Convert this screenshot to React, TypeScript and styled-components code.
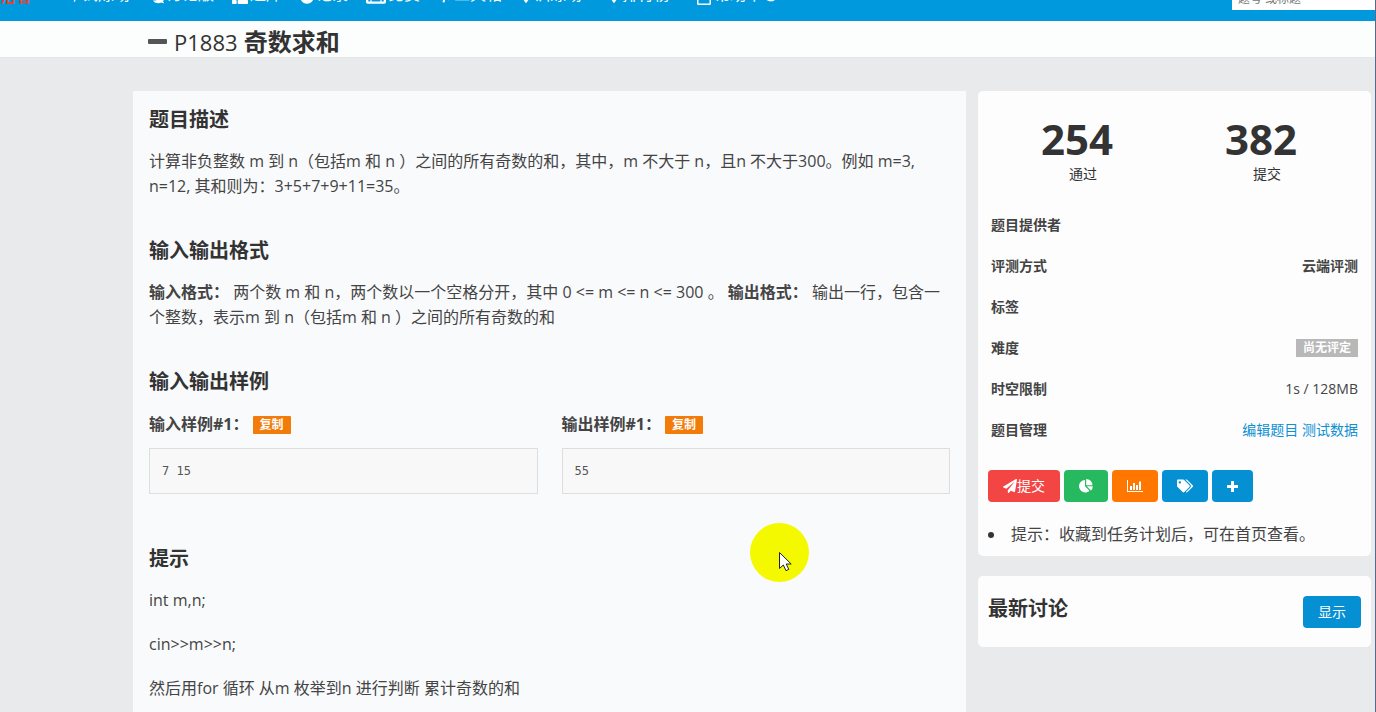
import React from "react";
import styled, { createGlobalStyle } from "styled-components";
import {
  FaBolt,
  FaComments,
  FaThList,
  FaClock,
  FaKeyboard,
  FaMapMarkerAlt,
  FaPaperPlane,
  FaTags,
  FaCode,
  FaRegCalendar,
} from "react-icons/fa";

const GlobalStyle = createGlobalStyle`
  *, *::before, *::after { box-sizing: border-box; }
  body {
    margin: 0;
    background: #e8eaeb;
    color: #333;
    font: 16px/25px "Open Sans", "Noto Sans CJK SC", sans-serif;
  }
  h1, h2, p, ul, dl, dd, pre { margin: 0; padding: 0; }
  button, input { font-family: inherit; }
  a { text-decoration: none; }
`;

const Page = styled.div`
  position: relative;
  display: flex;
  flex-direction: column;
  min-height: 100vh;
  overflow: hidden;
  border-right: 1px solid #56688c;
`;

const TopBar = styled.header`
  display: flex;
  align-items: flex-end;
  height: 21px;
  overflow: hidden;
  background: #0099dd;
`;

const Logo = styled.a`
  width: 70px;
  flex: none;
  padding-bottom: 12px;
  color: #e8432e;
  font-size: 16px;
  font-weight: 700;
`;

const Nav = styled.nav`
  display: flex;
  flex: 1;
  gap: 18px;
  padding-bottom: 14px;
`;

const NavLink = styled.a<{ $wide?: boolean }>`
  display: flex;
  align-items: center;
  gap: 2px;
  padding-right: ${(p) => (p.$wide ? 8 : 0)}px;
  color: #fff;
  white-space: nowrap;
  svg { margin-top: 5px; }
`;

const Search = styled.input`
  width: 143px;
  height: 24px;
  margin-bottom: 11px;
  padding: 0 6px;
  border: 0;
  background: #fff;
  font-size: 12px;
  &::placeholder { color: #777; }
`;

const TitleBar = styled.div`
  display: flex;
  align-items: center;
  gap: 7px;
  height: 37px;
  padding: 5px 0 0 148px;
  background: #fcfdfd;
  border-bottom: 1px solid #e4e6e8;
`;

const Dash = styled.span`
  width: 19px;
  height: 5px;
  border-radius: 1px;
  background: #555;
`;

const Title = styled.h1`
  padding-top: 1px;
  font-size: 24px;
  line-height: 32px;
`;

const ProblemId = styled.span`
  font-size: 22px;
  font-weight: 400;
`;

const Columns = styled.div`
  display: grid;
  flex: 1;
  grid-template-columns: minmax(0, 1fr) 393px;
  gap: 12px;
  padding: 33px 4px 0 133px;
`;

const Problem = styled.main`
  padding: 17px 16px 0;
  background: #f9fafc;
`;

const Section = styled.section<{ $gap?: number }>`
  margin-bottom: ${(p) => p.$gap ?? 40}px;
`;

const Heading = styled.h2`
  margin-bottom: 17px;
  font-size: 20px;
  line-height: 24px;
`;

const Text = styled.p`
  color: #444;
  & + & { margin-top: 19px; }
`;

const Samples = styled.div`
  display: grid;
  grid-template-columns: 1fr 1fr;
  gap: 24px;
`;

const SampleTitle = styled.div`
  display: flex;
  align-items: center;
  gap: 4px;
  padding-top: 1px;
  margin-bottom: 11px;
  color: #444;
  font-weight: 700;
`;

const CopyButton = styled.button`
  height: 18px;
  padding: 0 7px;
  border: 0;
  border-radius: 1px;
  background: #f37b0a;
  color: #fff;
  font-size: 12px;
  font-weight: 700;
  line-height: 18px;
`;

const Code = styled.pre`
  padding: 10px 12px;
  border: 1px solid #dedede;
  background: #f8f8f8;
  color: #555;
  font: 12px/24px "DejaVu Sans Mono", monospace;
`;

const Sidebar = styled.aside`
  display: flex;
  flex-direction: column;
  gap: 20px;
`;

const Card = styled.section`
  border-radius: 5px;
  background: #fdfdfe;
`;

const Stats = styled.div`
  display: grid;
  grid-template-columns: 1fr 1fr;
  padding: 24px 18px 19px 7px;
  text-align: center;
`;

const StatNumber = styled.div`
  font-size: 42px;
  font-weight: 700;
  line-height: 48px;
`;

const StatLabel = styled.div`
  padding-left: 12px;
  font-size: 14px;
  line-height: 22px;
`;

const Facts = styled.dl`
  padding: 0 13px;
`;

const Fact = styled.div`
  display: flex;
  align-items: center;
  justify-content: space-between;
  height: 41px;
  font-size: 14px;
  color: #444;
`;

const FactName = styled.dt`
  font-weight: 600;
`;

const FactLink = styled.a`
  color: #0e90d2;
`;

const Unrated = styled.span`
  display: block;
  height: 18px;
  padding: 0 7px;
  background: #b8b8b8;
  color: #fff;
  font-size: 12px;
  font-weight: 700;
  line-height: 18px;
`;

const Actions = styled.div`
  display: flex;
  gap: 4px;
  padding: 20px 10px 0;
`;

const Button = styled.button<{ $color?: string }>`
  display: flex;
  align-items: center;
  height: 32px;
  padding: 0 15px 2px;
  border: 0;
  border-radius: 4px;
  background: ${(p) => p.$color ?? "#0590d4"};
  color: #fff;
  font-size: 14px;
  svg { margin-top: 2px; }
`;

const Tips = styled.ul`
  padding: 20px 10px 9px;
  color: #444;
  list-style: none;
`;

const Tip = styled.li`
  display: flex;
  align-items: center;
  gap: 17px;
  &::before {
    content: "";
    width: 6px;
    height: 6px;
    border-radius: 50%;
    background: #333;
  }
`;

const Discussion = styled(Card)`
  display: flex;
  align-items: flex-start;
  justify-content: space-between;
  padding: 20px 10px 19px;
`;

const DiscussionTitle = styled(Heading)`
  margin: 1px 0 0;
`;

const Pointer = styled.svg`
  position: absolute;
  top: 523px;
  left: 750px;
  width: 59px;
  height: 59px;
  pointer-events: none;
`;

const PieIcon = () => (
  <svg width="14" height="14" viewBox="0 0 14 14" fill="#fff" aria-hidden="true">
    <path d="M6 1v6.3l4.5 4.4A6.2 6.2 0 1 1 6 1z" />
    <path d="M7.2 0A6.2 6.2 0 0 1 13.4 6.2H7.2z" />
    <path d="M7.8 7.3h6a6 6 0 0 1-1.8 4.2z" />
  </svg>
);

const BarsIcon = () => (
  <svg width="16" height="14" viewBox="0 0 16 14" fill="#fff" aria-hidden="true">
    <path d="M0 1h1v11h15v1H0zM3 7h2v4H3zM6 4h2v7H6zM9 6h2v5H9zM12 2.5h2V11h-2z" />
  </svg>
);

const PlusIcon = () => (
  <svg width="11" height="11" viewBox="0 0 11 11" fill="#fff" aria-hidden="true">
    <path d="M4 .5Q4 0 4.500 0h2Q7 0 7 .5V4h3.500Q11 4 11 4.500v2Q11 7 10.500 7H7v3.500Q7 11 6.500 11h-2Q4 11 4 10.500V7H.5Q0 7 0 6.500v-2Q0 4 .5 4H4z" />
  </svg>
);

const navItems = [
  { icon: <FaBolt size={10} />, label: "试炼场" },
  { icon: <FaComments size={16} />, label: "讨论版" },
  { icon: <FaThList size={16} />, label: "题库" },
  { icon: <FaClock size={14} />, label: "记录" },
  { icon: <FaKeyboard size={20} />, label: "比赛" },
  { icon: <FaCode size={14} />, label: "工具箱" },
  { icon: <FaMapMarkerAlt size={12} />, label: "训练场", wide: true },
  { icon: <FaMapMarkerAlt size={12} />, label: "排行榜", wide: true },
  { icon: <FaRegCalendar size={16} />, label: "帮助中心" },
];

const Sample = ({ title, value }: { title: string; value: string }) => (
  <div>
    <SampleTitle>
      {title}
      <CopyButton type="button">复制</CopyButton>
    </SampleTitle>
    <Code>{value}</Code>
  </div>
);

export default function App() {
  return (
    <Page>
      <GlobalStyle />
      <TopBar>
        <Logo href="#">洛谷</Logo>
        <Nav>
          {navItems.map((item) => (
            <NavLink href="#" key={item.label} $wide={item.wide}>
              {item.icon}
              {item.label}
            </NavLink>
          ))}
        </Nav>
        <Search type="search" aria-label="搜索" placeholder="题号 或标题" />
      </TopBar>
      <TitleBar>
        <Dash />
        <Title>
          <ProblemId>P1883</ProblemId> 奇数求和
        </Title>
      </TitleBar>

      <Columns>
        <Problem>
          <Section>
            <Heading>题目描述</Heading>
            <Text>
              计算非负整数 m 到 n（包括m 和 n ）之间的所有奇数的和，其中，m 不大于 n，且n
              不大于300。例如 m=3, n=12, 其和则为：3+5+7+9+11=35。
            </Text>
          </Section>
          <Section>
            <Heading>输入输出格式</Heading>
            <Text>
              <b>输入格式：</b> 两个数 m 和 n，两个数以一个空格分开，其中 0 &lt;= m &lt;= n &lt;= 300
              。 <b>输出格式：</b> 输出一行，包含一个整数，表示m 到 n（包括m 和 n
              ）之间的所有奇数的和
            </Text>
          </Section>
          <Section $gap={53}>
            <Heading>输入输出样例</Heading>
            <Samples>
              <Sample title="输入样例#1：" value="7 15" />
              <Sample title="输出样例#1：" value="55" />
            </Samples>
          </Section>
          <Section $gap={0}>
            <Heading>提示</Heading>
            <Text>int m,n;</Text>
            <Text>cin&gt;&gt;m&gt;&gt;n;</Text>
            <Text>然后用for 循环 从m 枚举到n 进行判断 累计奇数的和</Text>
          </Section>
        </Problem>

        <Sidebar>
          <Card>
            <Stats>
              <div>
                <StatNumber>254</StatNumber>
                <StatLabel>通过</StatLabel>
              </div>
              <div>
                <StatNumber>382</StatNumber>
                <StatLabel>提交</StatLabel>
              </div>
            </Stats>
            <Facts>
              <Fact>
                <FactName>题目提供者</FactName>
                <dd />
              </Fact>
              <Fact>
                <FactName>评测方式</FactName>
                <dd>
                  <b>云端评测</b>
                </dd>
              </Fact>
              <Fact>
                <FactName>标签</FactName>
                <dd />
              </Fact>
              <Fact>
                <FactName>难度</FactName>
                <dd>
                  <Unrated>尚无评定</Unrated>
                </dd>
              </Fact>
              <Fact>
                <FactName>时空限制</FactName>
                <dd>1s / 128MB</dd>
              </Fact>
              <Fact>
                <FactName>题目管理</FactName>
                <dd>
                  <FactLink href="#">编辑题目</FactLink> <FactLink href="#">测试数据</FactLink>
                </dd>
              </Fact>
            </Facts>
            <Actions>
              <Button type="button" $color="#f44545">
                <FaPaperPlane size={14} />
                提交
              </Button>
              <Button type="button" $color="#27b95f" aria-label="统计">
                <PieIcon />
              </Button>
              <Button type="button" $color="#ff7700" aria-label="排名">
                <BarsIcon />
              </Button>
              <Button type="button" aria-label="标签">
                <FaTags size={16} />
              </Button>
              <Button type="button" aria-label="收藏">
                <PlusIcon />
              </Button>
            </Actions>
            <Tips>
              <Tip>提示：收藏到任务计划后，可在首页查看。</Tip>
            </Tips>
          </Card>
          <Discussion>
            <DiscussionTitle>最新讨论</DiscussionTitle>
            <Button type="button">显示</Button>
          </Discussion>
        </Sidebar>
      </Columns>

      <Pointer viewBox="0 0 59 59" aria-hidden="true">
        <circle cx="29.500" cy="29.500" r="29.500" fill="#f5f900" />
        <path
          d="M29.500 29.500v16l3.800-3.500 2.700 5.700 2.800-1.300-2.600-5.400h5z"
          fill="#fff"
          stroke="#222"
          strokeWidth="1"
        />
      </Pointer>
    </Page>
  );
}
